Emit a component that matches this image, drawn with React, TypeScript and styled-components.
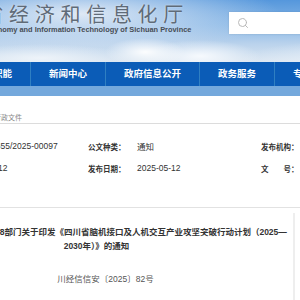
import styled, { createGlobalStyle } from "styled-components";
import { Search } from "lucide-react";

const GlobalStyle = createGlobalStyle`
  html, body {
    margin: 0;
    padding: 0;
    background: #fff;
  }
  body {
    width: 300px;
    height: 300px;
    overflow: hidden;
    font-family: "Liberation Sans", "Noto Sans CJK SC", sans-serif;
    color: #333;
  }
`;

const navList = ["首页", "机构职能", "新闻中心", "政府信息公开", "政务服务", "专题专栏", "互动交流"];

const infoRows = [
  [
    { label: "索 引 号：", value: "0081119655/2025-00097" },
    { label: "公文种类：", value: "通知" },
    { label: "发布机构：", value: "四川省经济和信息化厅" },
  ],
  [
    { label: "成文日期：", value: "2025-05-12" },
    { label: "发布日期：", value: "2025-05-12" },
    { label: "文　　号：", value: "川经信信安〔2025〕82号" },
  ],
];

const InfoItem = ({ label, value }: { label: string; value: string }) => {
  return (
    <Cell>
      <Label>{label}</Label>
      <Value>{value}</Value>
    </Cell>
  );
};

export default function App() {
  return (
    <>
      <GlobalStyle />
      <Page>
        <Header>
          <Brand>
            <SiteName>四川省经济和信息化厅</SiteName>
            <SiteNameEn>Department of Economy and Information Technology of Sichuan Province</SiteNameEn>
          </Brand>
          <SearchBox>
            <Search size={12} color="#b9b9b9" strokeWidth={2} />
          </SearchBox>
        </Header>
        <Nav>
          {navList.map((item, i) => (
            <NavItem key={item} $first={i === 0}>
              {item}
            </NavItem>
          ))}
        </Nav>
        <NavShadow />
        <Main>
          <Breadcrumb>位置：首页 &gt; 政务公开 &gt; 行政文件</Breadcrumb>
          <InfoTable>
            {infoRows.map((row) =>
              row.map((cell) => <InfoItem key={cell.label} label={cell.label} value={cell.value} />)
            )}
          </InfoTable>
          <Article>
            <DocTitle>
              四川省经济和信息化厅等8部门关于印发《四川省脑机接口及人机交互产业攻坚突破行动计划（2025—2030年）》的通知
            </DocTitle>
            <DocNo>川经信信安〔2025〕82号</DocNo>
          </Article>
        </Main>
      </Page>
    </>
  );
}

const Page = styled.div`
  width: 640px;
  margin-left: -100px;
`;

const Header = styled.header`
  height: 62px;
  box-sizing: border-box;
  padding-left: 32px;
  display: grid;
  grid-template-columns: 297px 220px;
  background:
    radial-gradient(ellipse 40px 14px at 245px 52px, rgba(255, 255, 255, 0.95), transparent),
    radial-gradient(ellipse 60px 16px at 300px 56px, rgba(250, 252, 255, 0.9), transparent),
    radial-gradient(ellipse 90px 14px at 140px 58px, rgba(240, 245, 250, 0.9), transparent),
    radial-gradient(ellipse 120px 20px at 460px 60px, rgba(235, 242, 250, 0.9), transparent),
    radial-gradient(ellipse 200px 40px at 180px 14px, rgba(228, 236, 246, 0.95), transparent),
    linear-gradient(180deg, #5597dc 0%, #86b6e6 40%, #b9d2ec 70%, #dbe6f1 100%);
`;

const Brand = styled.div`
  padding-top: 3px;
`;

const SiteName = styled.div`
  font-family: "Noto Sans CJK SC", sans-serif;
  font-size: 20px;
  line-height: 22px;
  letter-spacing: 5.7px;
  color: #5f6b78;
  white-space: nowrap;
  text-shadow: 0 0 2px rgba(255, 255, 255, 0.6);
`;

const SiteNameEn = styled.div`
  font-size: 7.4px;
  font-weight: bold;
  line-height: 9px;
  color: #474d55;
  white-space: nowrap;
`;

const SearchBox = styled.div`
  margin-top: 12px;
  height: 22px;
  background: #fff;
  display: flex;
  align-items: center;
  padding-left: 8px;
  box-shadow: 0 0 2px rgba(0, 0, 0, 0.12);
`;

const Nav = styled.nav`
  height: 24px;
  background: #0b5cb7;
  display: flex;
  white-space: nowrap;
`;

const NavItem = styled.a<{ $first?: boolean }>`
  padding: 0 18px;
  font-size: 9.5px;
  font-weight: bold;
  line-height: 24px;
  color: #fff;
  border-left: ${(p) => (p.$first ? "none" : "1px solid #2f7fc2")};
`;

const NavShadow = styled.div`
  height: 10px;
  background: #74a8dc;
`;

const Main = styled.main`
  width: 395px;
`;

const Breadcrumb = styled.div`
  padding: 16px 0 0 15px;
  height: 28px;
  box-sizing: border-box;
  font-size: 7px;
  line-height: 12px;
  color: #888;
  white-space: nowrap;
  border-bottom: 1px solid #dcdcdc;
  width: 640px;
`;

const InfoTable = styled.div`
  display: grid;
  grid-template-columns: repeat(3, 173px);
  grid-auto-rows: 22px;
  padding: 11px 0 28px 15px;
  border-bottom: 1px solid #e2e2e2;
  width: 640px;
  box-sizing: border-box;
`;

const Cell = styled.div`
  display: flex;
  align-items: center;
  white-space: nowrap;
`;

const Label = styled.span`
  width: 49px;
  flex-shrink: 0;
  font-size: 7.5px;
  font-weight: bold;
  color: #333;
`;

const Value = styled.span`
  font-size: 8.5px;
  color: #333;
`;

const Article = styled.section`
  margin-top: 5px;
  padding: 12px 6px 20px;
  border-right: 2px solid #eeeeee;
  min-height: 40px;
  text-align: center;
`;

const DocTitle = styled.h1`
  margin: 0;
  font-size: 8.5px;
  font-weight: bold;
  line-height: 14px;
  color: #333;
`;

const DocNo = styled.div`
  margin-top: 20px;
  padding-left: 18px;
  font-size: 8.5px;
  line-height: 12px;
  color: #555;
`;
